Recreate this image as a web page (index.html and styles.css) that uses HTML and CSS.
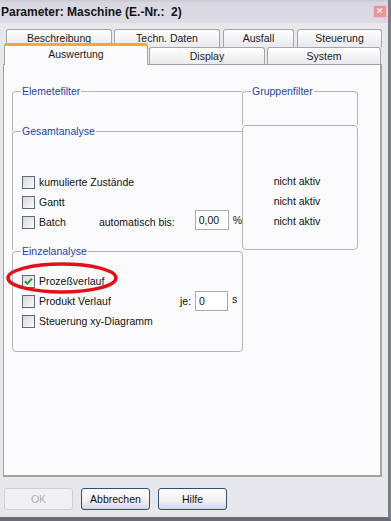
FILE: index.html
```html
<!DOCTYPE html>
<html lang="de">
<head>
  <meta charset="UTF-8" />
  <title>Parameter: Maschine</title>
  <link rel="stylesheet" href="styles.css">
</head>
<body>
  <div class="window">
    <div class="titlebar">
      <span class="title">Parameter: Maschine (E.-Nr.:&nbsp; 2)</span>
      <span class="close">&#x2715;</span>
    </div>

    <div class="tabs">
      <div class="tabrow back">
        <div class="tab w-beschreibung">Beschreibung</div>
        <div class="tab w-techn">Techn. Daten</div>
        <div class="tab w-ausfall">Ausfall</div>
        <div class="tab w-steuerung">Steuerung</div>
      </div>
      <div class="tabrow front">
        <div class="tab active w-auswertung">Auswertung</div>
        <div class="tab w-display">Display</div>
        <div class="tab w-system">System</div>
      </div>
    </div>

    <div class="panel">
      <div class="groups">
        <div class="col-left">
          <div class="group open g-element">
            <span class="legend">Elemetefilter</span>
          </div>
          <div class="group open g-gesamt">
            <span class="legend">Gesamtanalyse</span>
            <div class="rows">
              <label class="row"><span class="check"></span>kumulierte Zustände</label>
              <label class="row"><span class="check"></span>Gantt</label>
              <div class="row">
                <span class="check"></span><span class="lbl-batch">Batch</span>
                <span class="lbl-auto">automatisch bis:</span>
                <span class="field w-percent">0,00</span>
                <span class="unit">%</span>
              </div>
            </div>
          </div>
        </div>
        <div class="col-right">
          <div class="group top-only g-gruppe">
            <span class="legend">Gruppenfilter</span>
          </div>
          <div class="group g-status">
            <div class="status">nicht aktiv</div>
            <div class="status">nicht aktiv</div>
            <div class="status">nicht aktiv</div>
          </div>
        </div>
      </div>

      <div class="group g-einzel">
        <span class="legend">Einzelanalyse</span>
        <div class="rows">
          <label class="row">
            <span class="check">
              <svg width="11" height="11" viewBox="0 0 11 11"><path d="M2 5.2 L4.3 7.6 L9 2.6" fill="none" stroke="#21a121" stroke-width="2" /></svg>
            </span>Prozeßverlauf
          </label>
          <div class="row">
            <span class="check"></span><span class="lbl-produkt">Produkt Verlauf</span>
            <span class="lbl-je">je:</span>
            <span class="field w-sec">0</span>
            <span class="unit">s</span>
          </div>
          <label class="row"><span class="check"></span>Steuerung xy-Diagramm</label>
        </div>
      </div>
    </div>

    <div class="buttons">
      <button class="btn" disabled>OK</button>
      <button class="btn">Abbrechen</button>
      <button class="btn">Hilfe</button>
    </div>

    <svg class="mark" width="124" height="40" viewBox="0 0 124 40">
      <ellipse cx="62" cy="20" rx="54" ry="14" fill="none" stroke="#e3101a" stroke-width="3.5" />
    </svg>
  </div>
</body>
</html>
```

FILE: styles.css
```css
body {
  margin: 0;
  font-family: "Liberation Sans", Arial, sans-serif;
  font-size: 10.5px;
  color: #111;
  background: #e8e8ec;
}
.window {
  position: relative;
  width: 388px;
  height: 517px;
  background: #e8e8ec;
  border-right: 3px solid #7c7c86;
  border-bottom: 4px solid #6c6c78;
}

/* title bar */
.titlebar {
  height: 23px;
  display: flex;
  align-items: center;
  justify-content: space-between;
  background: linear-gradient(#c8c8d4 0, #d9d8e2 3px, #dcdbe4 100%);
}
.title {
  font-weight: bold;
  font-size: 12px;
  color: #141414;
  padding-left: 1px;
}
.close {
  width: 12px;
  height: 11px;
  margin-right: 1px;
  background: #e7979a;
  border: 1px solid #f3c4c4;
  color: #fff;
  font-size: 9px;
  line-height: 11px;
  text-align: center;
}

/* tabs */
.tabs {
  padding-top: 6px;
}
.tabrow {
  display: flex;
}
.tabrow.back {
  height: 18px;
  margin-left: 6px;
  gap: 2px;
}
.tabrow.front {
  height: 17px;
  margin-left: 4px;
  gap: 1px;
}
.tab {
  box-sizing: border-box;
  height: 18px;
  border: 1px solid #a3a6ab;
  border-bottom: none;
  border-radius: 3px 3px 0 0;
  background: linear-gradient(#ffffff, #e9e9ee);
  text-align: center;
  line-height: 17px;
  color: #1a1a1a;
}
.tabrow.front .tab {
  height: 17px;
  line-height: 17px;
}
.tabrow.front .tab.active {
  position: relative;
  z-index: 1;
  height: 22px;
  margin-top: -4px;
  line-height: 16px;
  background: #fbfbfd;
  border-top: 3px solid #f4a73c;
  border-radius: 2px 2px 0 0;
}
.w-beschreibung { width: 106px; }
.w-techn { width: 106px; }
.w-ausfall { width: 71px; margin-left: 1px; }
.w-steuerung { width: 85px; margin-left: 1px; }
.w-auswertung { width: 144px; }
.w-display { width: 116px; }
.w-system { width: 114px; margin-left: 1px; }

/* panel */
.panel {
  box-sizing: border-box;
  width: 379px;
  height: 413px;
  margin-left: 3px;
  background: #fbfbfd;
  border: 1px solid #9da1a8;
  border-right: 2px solid #a4a49c;
  border-bottom: 2px solid #a4a49c;
  padding: 26px 0 0 8px;
}
.groups {
  display: flex;
}
.col-left {
  width: 230px;
}
.col-right {
  width: 116px;
}
.group {
  position: relative;
  box-sizing: border-box;
  border: 1px solid #b3b3bc;
  border-radius: 4px;
}
.group.open {
  border-right: none;
  border-bottom: none;
  border-radius: 4px 0 0 0;
}
.group.top-only {
  border-bottom: none;
  border-radius: 4px 4px 0 0;
}
.legend {
  position: absolute;
  top: -7px;
  left: 8px;
  padding: 0 1px;
  background: #fbfbfd;
  color: #1f45a8;
  line-height: 12px;
}
.g-element { height: 40px; }
.g-gesamt { height: 119px; padding: 40px 0 0 9px; }
.g-gruppe { height: 34px; }
.g-status {
  height: 125px;
  padding-top: 45px;
}
.g-einzel {
  width: 231px;
  height: 101px;
  margin-top: 1px;
  padding: 19px 0 0 9px;
}

/* rows */
.row {
  display: flex;
  align-items: center;
  height: 20px;
}
.check {
  box-sizing: border-box;
  display: flex;
  align-items: center;
  justify-content: center;
  width: 13px;
  height: 13px;
  margin-right: 4px;
  border: 1px solid #5d6a80;
  background: linear-gradient(135deg, #d8d8dc, #fbfbfb);
}
.lbl-batch { width: 60px; }
.lbl-auto { width: 96px; }
.lbl-produkt { width: 141px; }
.lbl-je { width: 15px; }
.field {
  box-sizing: border-box;
  height: 20px;
  border: 1px solid #a9a9b0;
  background: #fff;
  padding-left: 3px;
  line-height: 18px;
}
.w-percent { width: 34px; margin-top: -4px; }
.w-sec { width: 33px; }
.unit {
  margin-left: 4px;
  margin-top: -4px;
}
.status {
  height: 20px;
  line-height: 20px;
  text-align: center;
  margin-left: -6px;
}

/* buttons */
.buttons {
  display: flex;
  gap: 8px;
  padding: 11px 0 0 4px;
}
.btn {
  box-sizing: border-box;
  width: 69px;
  height: 22px;
  font-family: "Liberation Sans", Arial, sans-serif;
  font-size: 10.5px;
  color: #111;
  border: 1px solid #2f4f78;
  border-radius: 3px;
  background: linear-gradient(#ffffff, #f0f0f4 60%, #d6d6e0);
  padding: 0;
}
.btn:disabled {
  color: #b0b0b0;
  border-color: #cfcfd2;
  background: #f1f1f3;
}

/* red marker ring */
.mark {
  position: absolute;
  left: 0;
  top: 258px;
}
```
